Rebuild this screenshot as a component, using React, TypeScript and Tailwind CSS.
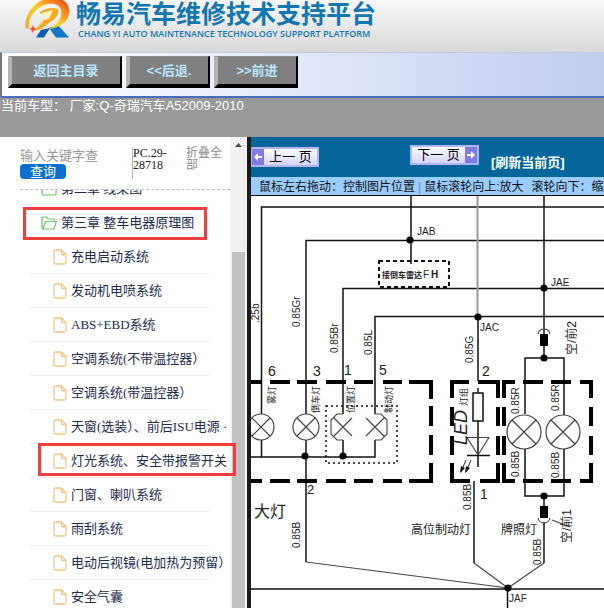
import { useState } from 'react';

type Label = { x: number; y: number; text: string; size?: number; bold?: boolean; italic?: boolean };

const treeItems = [
  '充电启动系统',
  '发动机电喷系统',
  'ABS+EBD系统',
  '空调系统(不带温控器）',
  '空调系统(带温控器）',
  '天窗(选装）、前后ISU电源 ·',
  '灯光系统、安全带报警开关',
  '门窗、喇叭系统',
  '雨刮系统',
  '电动后视镜(电加热为预留）',
  '安全气囊',
];

const markedItem = '灯光系统、安全带报警开关';

const Logo = () => (
  <svg width="46" height="39" viewBox="0 0 46 39" className="shrink-0" aria-hidden="true">
    <defs>
      <linearGradient id="swoosh" x1="0" y1="1" x2="1" y2="0">
        <stop offset="0" stopColor="#f6a21b" />
        <stop offset="0.45" stopColor="#fdd12a" />
        <stop offset="0.75" stopColor="#f58220" />
        <stop offset="1" stopColor="#d9301c" />
      </linearGradient>
    </defs>
    <path d="M17 30 L26 28 L20 37.500 L12 37.500 Z" fill="#1259b4" />
    <path d="M25 28 L34 25 L45 37.500 L32 37.500 Z" fill="#1276c4" />
    <path
      d="M2 29 C-1 17 9 1 25 -2 C39 -4 47 4 45 14 C43 23 34 28 25 29 C33 25 39 18 37 10 C35 3 26 2 18 6 C8 12 4 19 5 27 Z"
      fill="url(#swoosh)"
    />
    <path
      d="M15 13 C21 8 29 7 34 9 C36 13 32 19 26 22 L17 29 L11 31 L22 15 Z"
      fill="#f7a823"
    />
    <path d="M17 13 L29 10 L25 19 L20 20 L14 28 L21 15 Z" fill="#fff3b8" />
    <path d="M9 25 L10.500 28 L13 29 L10 30.500 L8 33 L7.500 30 L5 28.500 L8 28 Z" fill="#ea5a1f" />
  </svg>
);

const FileIcon = () => (
  <svg width="14" height="16" viewBox="0 0 14 16" fill="none" stroke="#f8c384" strokeWidth="1.300" className="shrink-0" aria-hidden="true">
    <path d="M2.500 1 H8.500 L13 5.500 V13.500 Q13 15 11.500 15 H2.500 Q1 15 1 13.500 V2.500 Q1 1 2.500 1 Z" />
    <path d="M8.500 1 V4.500 Q8.500 5.500 9.500 5.500 H13" />
  </svg>
);

const FolderIcon = () => (
  <svg width="16" height="14" viewBox="0 0 16 14" fill="none" stroke="#6fc36b" strokeWidth="1.200" className="shrink-0" aria-hidden="true">
    <path d="M2 13 L1 12 V2 Q1 1 2 1 H5.500 L7 3 H12.500 Q13.500 3 13.500 4 V5" />
    <path d="M2 13 L4.500 5.500 H15.300 L13 13 Z" />
  </svg>
);

const ClosedFolderIcon = () => (
  <svg width="16" height="14" viewBox="0 0 16 14" fill="none" stroke="#6fc36b" strokeWidth="1.200" className="shrink-0" aria-hidden="true">
    <path d="M1 12 V2 Q1 1 2 1 H6 L8 3 H14 Q15 3 15 4 V12 Q15 13 14 13 H2 Q1 13 1 12 Z" />
  </svg>
);

const Lamp = ({ x, y, r }: { x: number; y: number; r: number }) => {
  const d = Math.round(r * 0.7);
  return (
    <g stroke="#444" strokeWidth="1.200" fill="none">
      <circle cx={x} cy={y} r={r} />
      <path d={`M${x - d} ${y - d} L${x + d} ${y + d} M${x + d} ${y - d} L${x - d} ${y + d}`} />
    </g>
  );
};

const flatLabels: Label[] = [
  { x: 417, y: 235, text: 'JAB' },
  { x: 480, y: 331, text: 'JAC' },
  { x: 551, y: 286, text: 'JAE' },
  { x: 509, y: 602, text: 'JAF' },
  { x: 382, y: 278, text: '接倒车雷达', size: 8, bold: true },
  { x: 423, y: 278, text: 'F', size: 10 },
  { x: 431, y: 278, text: 'H', size: 10, bold: true },
  { x: 268, y: 376, text: '6', size: 14 },
  { x: 313, y: 376, text: '3', size: 14 },
  { x: 344, y: 375, text: '1', size: 14 },
  { x: 379, y: 375, text: '5', size: 14 },
  { x: 482, y: 376, text: '2', size: 14 },
  { x: 307, y: 494, text: '2', size: 13 },
  { x: 480, y: 499, text: '1', size: 14 },
  { x: 254, y: 517, text: '大灯', size: 16 },
  { x: 411, y: 534, text: '高位制动灯', size: 12 },
  { x: 501, y: 534, text: '牌照灯', size: 12 },
];

const uprightLabels: Label[] = [
  { x: 259, y: 323, text: '.25b' },
  { x: 300, y: 327, text: '0.85Gr' },
  { x: 338, y: 353, text: '0.85Br' },
  { x: 372, y: 355, text: '0.85L' },
  { x: 473, y: 363, text: '0.85G' },
  { x: 275, y: 404, text: '雾灯', size: 9 },
  { x: 319, y: 413, text: '倒车灯', size: 9 },
  { x: 354, y: 413, text: '位置灯', size: 9 },
  { x: 392, y: 413, text: '制动灯', size: 9 },
  { x: 467, y: 406, text: '灯组', size: 9 },
  { x: 467, y: 445, text: 'LED', size: 18, italic: true },
  { x: 519, y: 414, text: '0.85R' },
  { x: 559, y: 411, text: '0.85R' },
  { x: 519, y: 477, text: '0.85B' },
  { x: 559, y: 478, text: '0.85B' },
  { x: 300, y: 548, text: '0.85B' },
  { x: 471, y: 510, text: '0.85B' },
  { x: 541, y: 565, text: '0.85B' },
  { x: 576, y: 355, text: '空/前2', size: 12 },
  { x: 571, y: 543, text: '空/前1', size: 12 },
];

const junctions = [
  [410, 240],
  [544, 288],
  [478, 317],
  [544, 358],
  [305, 456],
  [343, 456],
  [544, 496],
  [508, 588],
];

// Wires run past the right edge so that a wider window still shows them.
const WiringDiagram = () => (
  <svg
    width="353"
    height="412"
    viewBox="251 196 353 412"
    className="block shrink-0 overflow-visible [font-family:'Liberation_Sans','Noto_Sans_CJK_SC',sans-serif]"
    role="img"
    aria-label="灯光系统电路图"
  >
    <g fill="none" stroke="#111" strokeWidth="1.500">
      <path d="M261.500 414 V207 H2400 M306 414 V240.500 H2400 M343 414 V288.500 H2400 M375 414 V316.500 H2400" />
      <path d="M411 196 V264 M544 196 V358 M478 316 V381" />
      <path d="M525 414 V358 H564 V415 M525 449 V496 H564 V449 M544 496 V506" />
      <path d="M261.500 440 V457 M343 440 V457 M251 457 H375 V440 M306 440 V562" />
      <path d="M474 481 V563 M544 522 V563 M251 589 H2400 M507.500 589 V1600" />
      <path d="M478 388 V393 M473 393 H483 V421 H473 Z M478 421 V467 M467 455.500 H490" />
    </g>
    <path d="M477.500 196 V316" stroke="#999" strokeWidth="2" />
    <g fill="none" stroke="#444" strokeWidth="1.100">
      <path d="M306 562 L508 588 M474 563 L508 588 L544 563" />
      <path d="M467 437.500 H489 L478 455 Z" />
      <path d="M343 414 H337 L331 420 V434 L337 440 H343 M334 418 L352 436 M352 418 L334 436" />
      <path d="M375 414 H381 L387 420 V434 L381 440 H375 M366 418 L384 436 M384 418 L366 436" />
      <path d="M538 334 Q539 329 544 329 Q549 329 550 334 M538 518 Q539 523 544 523 Q549 523 550 518 M552 520 L570 527" />
      <path d="M466 460 L461 472 M471 460 L466 472" />
    </g>
    <path d="M460 473 L461 466 L465 468 Z M465 473 L466 466 L470 468 Z" fill="#111" />
    <path d="M540 334 H548 V346 H540 Z M540 506 H548 V518 H540 Z" fill="#000" />

    <g fill="none" stroke="#111" strokeWidth="2" strokeDasharray="4 3">
      <rect x="379" y="261" width="70" height="26" />
      <rect x="326" y="406" width="71" height="57" strokeWidth="1.500" strokeDasharray="2 3" />
    </g>

    <g fill="none" stroke="#000" strokeWidth="4">
      <path d="M251 382 H262 M270 382 H290 M297 382 H317 M326 382 H346 M354 382 H373 M383 382 H402 M409 382 H431 V399 M431 406 V426 M431 435 V455 M431 463 V481 H409" />
      <path d="M251 481 H262 M270 481 H290 M297 481 H317 M326 481 H346 M354 481 H373 M383 481 H402" />
      <path d="M469 382 H452 V398 M452 407 V426 M452 436 V455 M452 463 V481 H470 M478 382 H498 V398 M498 407 V426 M498 436 V455 M498 463 V481 H480" />
      <path d="M515 382 H504 V398 M504 407 V426 M504 436 V455 M504 463 V481 H515 M580 382 H591 V398 M591 407 V426 M591 436 V455 M591 463 V481 H580" />
      <path d="M523 382 H543 M551 382 H571 M523 481 H543 M551 481 H571" />
    </g>

    <Lamp x={261} y={427} r={13} />
    <Lamp x={306} y={427} r={13} />
    <Lamp x={524} y={432} r={17} />
    <Lamp x={563} y={432} r={17} />

    {junctions.map(([x, y]) => (
      <circle key={`${x}-${y}`} cx={x} cy={y} r="3.600" fill="#000" />
    ))}

    <g fill="#222">
      {flatLabels.map((l) => (
        <text key={`${l.x}-${l.y}`} x={l.x} y={l.y} fontSize={l.size ?? 10} fontWeight={l.bold ? 700 : 400}>
          {l.text}
        </text>
      ))}
      {uprightLabels.map((l) => (
        <text
          key={`${l.x}-${l.y}`}
          transform={`translate(${l.x} ${l.y}) rotate(-90)`}
          fontSize={l.size ?? 10}
          fontStyle={l.italic ? 'italic' : 'normal'}
        >
          {l.text}
        </text>
      ))}
    </g>
  </svg>
);

const ToolButton = ({ label, className }: { label: string; className: string }) => (
  <button
    type="button"
    className={`h-8 border-t border-r-2 border-b-4 border-l-4 border-t-[#8a8a8a] border-r-black border-b-black border-l-[#b4b4b4] bg-[#808080] text-[13px] leading-4 font-bold text-[#b9e6fb] ${className}`}
  >
    {label}
  </button>
);

const Arrow = ({ flip }: { flip?: boolean }) => (
  <span className="flex w-3 items-center justify-center bg-[#7c7ce4]">
    <svg width="8" height="8" viewBox="0 0 8 8" className={flip ? 'rotate-180' : ''} aria-hidden="true">
      <path d="M0 4 L4 0 V3 H8 V5 H4 V8 Z" fill="#fff" />
    </svg>
  </span>
);

const App = () => {
  const [keyword, setKeyword] = useState('');

  return (
    <div className="flex h-screen flex-col overflow-hidden bg-white [font-family:'Liberation_Sans','Noto_Sans_CJK_SC',sans-serif]">
      <header className="flex h-13 shrink-0 items-start bg-linear-to-b from-[#f8f8f8] to-[#d9d9d9] pl-6 whitespace-nowrap">
        <Logo />
        <div className="pl-1.5 text-[#1276b0]">
          <h1 className="text-[25px] leading-7 font-bold">畅易汽车维修技术支持平台</h1>
          <p className="pl-0.5 text-[9px] leading-3 font-semibold [font-family:'Open_Sans',sans-serif]">
            CHANG YI AUTO MAINTENANCE TECHNOLOGY SUPPORT PLATFORM
          </p>
        </div>
      </header>

      <div className="flex h-[46px] shrink-0 items-start gap-1 border-t border-b-2 border-l-2 border-t-[#c3c9e4] border-b-[#4a6abf] border-l-[#777] bg-linear-to-r from-white via-[#e2e8fa] to-[#c0cdf0] pt-[3px] pl-1.5">
        <ToolButton label="返回主目录" className="w-[114px]" />
        <ToolButton label="<<后退." className="w-[84px]" />
        <ToolButton label=">>前进" className="w-[84px]" />
      </div>

      <p className="h-[39px] shrink-0 bg-[#999] pl-px text-[13px] leading-4 whitespace-pre text-white">
        当前车型： 厂家:Q-奇瑞汽车A52009-2010
      </p>

      <div className="flex min-h-0 flex-1">
        <aside className="flex w-[230px] shrink-0 flex-col [font-family:'Liberation_Serif','Noto_Sans_CJK_SC',serif]">
          <div className="ml-5 flex h-[53px] shrink-0 border-b border-dashed border-[#b9bdd0] pt-2.5">
            <form className="flex w-28 flex-col items-start" onSubmit={(e) => e.preventDefault()}>
              <input
                type="text"
                aria-label="关键字"
                placeholder="输入关键字查"
                value={keyword}
                onChange={(e) => setKeyword(e.target.value)}
                className="h-[17px] w-20 text-[13px] leading-4 outline-none placeholder:text-[#999]"
              />
              <button type="submit" className="h-[15px] w-[46px] rounded bg-[#0a6fce] text-[13px] leading-[15px] text-white">
                查询
              </button>
            </form>
            <p className="h-8 w-[54px] border-l border-[#bbb] text-[12px] leading-3 text-[#222]">
              PC.29-
              <br />
              28718
            </p>
            <a href="#collapse" className="w-9 text-[12px] leading-3 text-[#8c8c8c]">
              折叠全部
            </a>
          </div>

          <div className="min-h-0 flex-1 overflow-x-visible overflow-y-clip">
            <ul className="-mt-[18px] text-[13px] leading-4 whitespace-nowrap text-[#1c2c50]">
              <li className="flex h-[34px] items-center gap-1 pl-[41px]">
                <ClosedFolderIcon />
                <a href="#chapter-2">第二章 线束图</a>
              </li>
              <li className="relative flex h-[34px] items-center gap-1 pl-[41px]">
                <FolderIcon />
                <a href="#chapter-3">第三章 整车电器原理图</a>
                <span className="absolute top-px left-[23px] h-[33px] w-[184px] border-3 border-[#ef3e3e]" />
              </li>
              {treeItems.map((item) => (
                <li key={item} className="relative pl-[29px]">
                  <div className="mr-5 flex h-[34px] items-center gap-1 border-b border-[#efefef] pl-6">
                    <FileIcon />
                    <a href={`#${item}`} className="-mr-5 min-w-0 flex-1 overflow-hidden">
                      {item}
                    </a>
                  </div>
                  {item === markedItem && (
                    <span className="absolute -top-px left-[38px] z-10 h-[33px] w-[198px] border-3 border-[#ef3e3e]" />
                  )}
                </li>
              ))}
            </ul>
          </div>
        </aside>

        <div className="flex w-[17px] shrink-0 flex-col items-center bg-[#f1f1f1] pt-1.5">
          <svg width="7" height="4" viewBox="0 0 7 4" aria-hidden="true">
            <path d="M0 4 L3.500 0 L7 4 Z" fill="#505050" />
          </svg>
          <div className="mt-[105px] w-[13px] flex-1 bg-[#c1c1c1]" />
        </div>

        <main className="flex min-w-0 flex-1 flex-col overflow-hidden border-l-4 border-[#1a1a1a] whitespace-nowrap">
          <div className="flex h-10 shrink-0 items-start bg-[#04669b] pt-2">
            <button
              type="button"
              className="mt-0.5 flex h-5 w-[68px] border-2 border-l border-[#b4b4ee] bg-linear-to-b from-white to-[#d4d4f6] text-[13px] leading-4 text-black"
            >
              <Arrow />
              <span className="flex-1">上一 页</span>
            </button>
            <button
              type="button"
              className="ml-[91px] flex h-5 w-[69px] border-2 border-[#b4b4ee] bg-linear-to-b from-white to-[#d4d4f6] text-[13px] leading-4 text-black"
            >
              <span className="flex-1">下一 页</span>
              <Arrow flip />
            </button>
            <a href="#refresh" className="mt-2.5 ml-3 text-[13px] leading-4 font-bold text-white">
              [刷新当前页]
            </a>
          </div>
          <p className="h-[19px] shrink-0 border-b border-black bg-[#99ccff] pl-2 text-[12px] leading-5 text-[#111]">
            鼠标左右拖动：控制图片位置
            <span className="mx-[3px] text-[#6a8fc0]">|</span>
            鼠标滚轮向上:放大
            <span className="ml-2">滚轮向下：缩小</span>
          </p>
          <div className="min-h-0 flex-1 overflow-hidden bg-white">
            <WiringDiagram />
          </div>
        </main>
      </div>
    </div>
  );
};

export default App;
